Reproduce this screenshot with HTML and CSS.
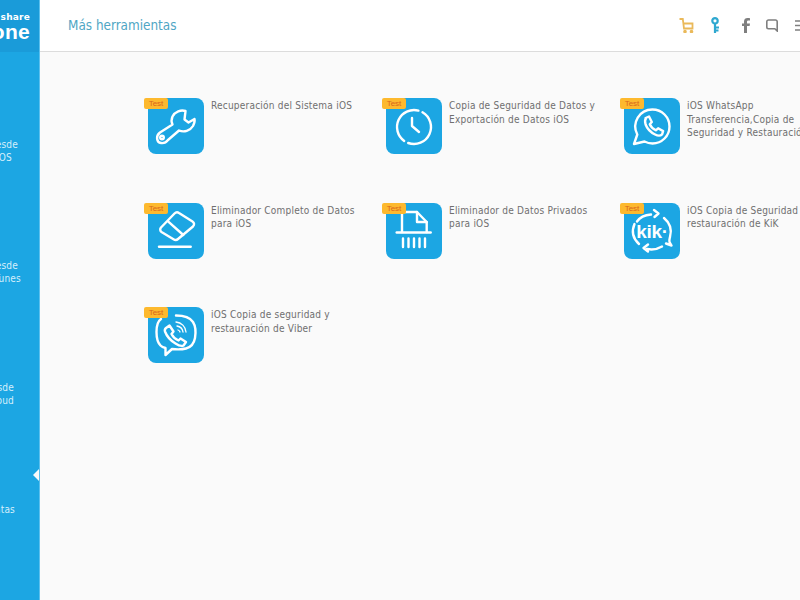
FILE: index.html
```html
<!DOCTYPE html>
<html lang="es">
<head>
<meta charset="utf-8">
<title>Más herramientas</title>
<link rel="stylesheet" href="styles.css">
</head>
<body>
<div class="app">
  <aside class="sidebar">
    <div class="logo">
      <div class="logo-top">share</div>
      <div class="logo-main">one</div>
    </div>
    <nav class="nav">
      <div class="nav-item n1"><div class="l-a">Restaurar desde</div><div class="l-b">dispositivo iOS</div></div>
      <div class="nav-item n2"><div class="l-c">Restaurar desde</div><div class="l-d">archivo de iTunes</div></div>
      <div class="nav-item n3"><div class="l-e">Restaurar desde</div><div class="l-e">archivo de iCloud</div></div>
      <div class="nav-item n4"><div class="l-f">Más herramientas</div><span class="caret"></span></div>
    </nav>
  </aside>
  <main class="main">
    <header class="header">
      <h1 class="title">Más herramientas</h1>
      <div class="tools">
        <svg class="tool t-cart" width="15" height="15" viewBox="0 0 15 15" fill="none" stroke="#eab95a" stroke-width="1.8"><path d="M.5 1h3.300l1.200 9.500h8.500V5.500H4.500"/><circle cx="6" cy="13.500" r=".9"/><circle cx="12.500" cy="13.500" r=".9"/></svg>
        <svg class="tool t-key" width="9" height="17" viewBox="0 0 9 17" fill="none" stroke="#2fa8d0" stroke-width="2.200"><circle cx="4" cy="3.800" r="2.700"/><path d="M4 6.500V16M4 10.500h4M4 13.500h3.500"/></svg>
        <svg class="tool t-f" width="8" height="15" viewBox="0 0 8 15" fill="#7f7f7f"><path d="M2 15V8H0V5.500h2V3.500C2 1 3.500 0 5.500 0c1 0 2 .1 2.500.2v2.300H6.500c-1.200 0-1.500.5-1.500 1.500v1.500h3L7.600 8H5v7z"/></svg>
        <svg class="tool t-chat" width="12" height="13" viewBox="0 0 12 13" fill="none" stroke="#7f7f7f" stroke-width="1.600"><path d="M2.500 1h7A1.700 1.700 0 0 1 11.200 2.700V12L8.800 9.700H2.500A1.700 1.700 0 0 1 .8 8V2.700A1.700 1.700 0 0 1 2.500 1z"/></svg>
        <svg class="tool t-menu" width="14" height="11" viewBox="0 0 14 11" fill="none" stroke="#7f7f7f" stroke-width="1.600"><path d="M0 1h14M0 5.500h14M0 10h14"/></svg>
      </div>
    </header>
    <section class="grid">
      <article class="card">
        <div class="icon"><span class="badge">Test</span>
          <svg width="56" height="56" viewBox="0 0 56 56" class="glyph"><path d="M37.500 13C33 11.500 27 13.500 24.500 18.500 23 22 23.500 24.500 24.500 26.500L12 34.500C7.500 38 8.500 44.500 13 45 16 45.500 18.500 44 20 42L31 32.500C36 34.500 42 33 45 28 46.500 25 47 23 46.500 21L40.500 24.500 36.500 21.500z"/><circle cx="14" cy="39.500" r="1.800"/></svg>
        </div>
        <p class="label">Recuperación del Sistema iOS</p>
      </article>
      <article class="card">
        <div class="icon"><span class="badge">Test</span>
          <svg width="56" height="56" viewBox="0 0 56 56" class="glyph"><path d="M36.500 14.300A17 17 0 0 1 22.200 45"/><path d="M18.200 42.900A17 17 0 0 1 32.400 12.600"/><path d="M26 20v8l7 6"/></svg>
        </div>
        <p class="label">Copia de Seguridad de Datos y Exportación de Datos iOS</p>
      </article>
      <article class="card">
        <div class="icon"><span class="badge">Test</span>
          <svg width="56" height="56" viewBox="0 0 56 56" class="glyph"><path d="M28.500 11.500a17 17 0 0 1 0 34c-3 0-5.500-.7-8-2L10 46l3.300-9.500A17 17 0 0 1 28.500 11.500z"/><path d="M21.500 20l3.500-1.500 2.800 5.500-2 2.300c1 2.500 3 4.500 6 6l2.300-2 5 2.800-1 3.200c-1.500 1.500-4.500 1.500-7 .2-5-2.500-8-6-9.500-10-.8-2.500-.6-5 .5-6.500z"/></svg>
        </div>
        <p class="label">iOS WhatsApp Transferencia,Copia de Seguridad y Restauración</p>
      </article>
      <article class="card">
        <div class="icon"><span class="badge">Test</span>
          <svg width="56" height="56" viewBox="0 0 56 56" class="glyph"><path d="M13 24.500L26.500 10.500c1.200-1.200 3-1.500 4.500-.5l13.500 8.500c2 1.300 2 3.500.5 5L30 36c-1.300 1.200-3 1.200-4.500.2L13.500 29c-1.500-1-1.700-3-.5-4.500z"/><path d="M20.300 18.700l15 13.300"/><path d="M11 43.700h31.700"/></svg>
        </div>
        <p class="label">Eliminador Completo de Datos para iOS</p>
      </article>
      <article class="card">
        <div class="icon"><span class="badge">Test</span>
          <svg width="56" height="56" viewBox="0 0 56 56" class="glyph"><path d="M16 29V9h15l9.700 10v10"/><path d="M31 9v10h9.700"/><path d="M10.700 29.500h34"/><path d="M17 35.500v8.500M22.500 35.500v8.500M28 35.500v8.500M33.500 35.500v8.500M39 35.500v8.500"/></svg>
        </div>
        <p class="label">Eliminador de Datos Privados para iOS</p>
      </article>
      <article class="card">
        <div class="icon"><span class="badge">Test</span>
          <svg width="56" height="56" viewBox="0 0 56 56" class="glyph"><path d="M13 18.500C16 14 21 12 27 11.500M30 7l4.500 3.500-4 3.500M40 15c6 5 8 12 6 19-.5 2-1 3-.5 5l2 3.500-5.500-2M38 43.500c-5 3-10 3.500-15 2.500M24 41.500l-4.500 3.500 4.500 3.500M15 41C9 35.500 7.500 28 10.500 21"/></svg>
          <span class="kik">kik·</span>
        </div>
        <p class="label">iOS Copia de Seguridad y restauración de KiK</p>
      </article>
      <article class="card">
        <div class="icon"><span class="badge">Test</span>
          <svg width="56" height="56" viewBox="0 0 56 56" class="glyph"><path d="M13 12c-3 2-4.500 6-4.500 13 0 6 1 10.500 4 13.500 1 1 3 2 5 2.500v7l6.500-6c5 .5 10 .5 14-.5 6-1.500 8-5 9-10.500 1-6 .5-12-2-16-3-4.500-9-6.500-17-6.500"/><path d="M18 21l3.500-2.500 4 6-2 2.500c1.500 3 3.500 5 7 6.500l2-2 5.500 3.500-2.500 3.500c-2 1-5 0-8-2-5-3-9-8-10.500-12-.5-1.500-.2-2.500 1-3.500z"/><path class="thin" d="M28 15c5.500.5 9.500 4.500 10 10M29 19c3 .5 5.500 3 6 6M30 23c1 .3 1.700 1 2 2"/></svg>
        </div>
        <p class="label">iOS Copia de seguridad y restauración de Viber</p>
      </article>
    </section>
  </main>
</div>
</body>
</html>
```
FILE: styles.css
```css
html, body {
  margin: 0;
  padding: 0;
  height: 100%;
  overflow: hidden;
}
.app {
  display: flex;
  width: 800px;
  height: 600px;
  overflow: hidden;
  font-family: "DejaVu Sans Condensed", "DejaVu Sans", sans-serif;
  font-stretch: condensed;
  background: #fafafa;
}
.sidebar {
  flex: 0 0 40px;
  width: 40px;
  background: #1ca6e3;
  border-right: 1px solid #5cc0ee;
  box-sizing: border-box;
  overflow: hidden;
  color: #d6effb;
  font-size: 10px;
  line-height: 13px;
  letter-spacing: .2px;
}
.logo {
  height: 52px;
  background: #1a9bd9;
  color: #fff;
  display: flex;
  flex-direction: column;
  align-items: flex-end;
  padding: 12px 9px 0 0;
  box-sizing: border-box;
}
.logo-top {
  font-family: "DejaVu Sans", sans-serif;
  font-stretch: normal;
  font-size: 9px;
  font-weight: 700;
  line-height: 10px;
  letter-spacing: .2px;
}
.logo-main {
  font-family: "Liberation Sans", sans-serif;
  font-stretch: normal;
  font-size: 21px;
  font-weight: 700;
  line-height: 19px;
  letter-spacing: .3px;
}
.nav {
  position: relative;
  display: flex;
  flex-direction: column;
  align-items: flex-end;
  white-space: nowrap;
}
.nav-item {
  display: flex;
  flex-direction: column;
  align-items: flex-end;
  width: 100%;
  position: relative;
}
.n1 { margin-top: 86px; }
.n2 { margin-top: 95px; }
.n3 { margin-top: 96px; }
.n4 { margin-top: 96px; }
.l-a { margin-right: 21px; }
.l-b { margin-right: 27px; }
.l-c { margin-right: 21px; }
.l-d { margin-right: 18px; }
.l-e { margin-right: 25px; }
.l-f { margin-right: 24px; }
.caret {
  position: absolute;
  right: -1px;
  top: -35px;
  border-style: solid;
  border-width: 7px 7px 7px 0;
  border-color: transparent #fafafa transparent transparent;
}
.main {
  flex: 1;
  display: flex;
  flex-direction: column;
  min-width: 0;
}
.header {
  height: 52px;
  flex: none;
  box-sizing: border-box;
  background: #fff;
  border-bottom: 1px solid #dcdcdc;
  display: flex;
  align-items: center;
  justify-content: space-between;
  padding: 0 0 0 28px;
}
.title {
  margin: 0;
  font-size: 13.400px;
  font-weight: 400;
  color: #4fa6c4;
}
.tools {
  display: flex;
  align-items: center;
  margin-right: -9px;
}
.tool { flex: none; display: block; }
.t-key { margin-left: 17px; }
.t-f { margin-left: 22px; }
.t-chat { margin-left: 16px; }
.t-menu { margin-left: 17px; }
.grid {
  display: grid;
  grid-template-columns: repeat(3, 238px);
  grid-auto-rows: 104.5px;
  padding: 46px 0 0 108px;
}
.card {
  display: flex;
  align-items: flex-start;
  gap: 7px;
  min-width: 0;
}
.icon {
  position: relative;
  flex: 0 0 56px;
  width: 56px;
  height: 56px;
  background: #1ca6e3;
  border-radius: 8px;
}
.badge {
  position: absolute;
  z-index: 1;
  left: -4px;
  top: 0;
  width: 24px;
  height: 11px;
  background: #fdb92e;
  border-radius: 2px;
  color: #d9651c;
  font: 8px/11px "Liberation Sans", sans-serif;
  text-align: center;
}
.glyph {
  display: block;
  fill: none;
  stroke: #fff;
  stroke-width: 2.4;
  stroke-linecap: round;
  stroke-linejoin: round;
}
.thin { stroke-width: 1.3; }
.kik {
  position: absolute;
  left: 0;
  right: 0;
  top: 17px;
  text-align: center;
  color: #fff;
  font: 700 19px/24px "Liberation Sans", sans-serif;
  letter-spacing: -.3px;
}
.label {
  margin: 0;
  width: 150px;
  flex: none;
  padding-top: 1px;
  font-size: 10px;
  line-height: 13.500px;
  letter-spacing: .22px;
  color: #6f6f6f;
}
```
